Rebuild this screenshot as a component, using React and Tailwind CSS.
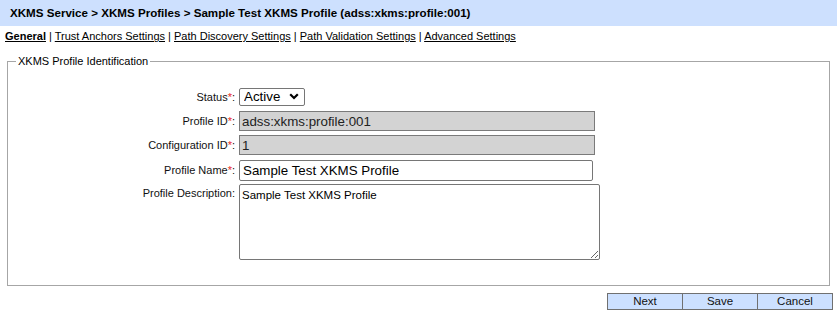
import { useState } from 'react';

const TABS = [
  { label: 'General', active: true },
  { label: 'Trust Anchors Settings' },
  { label: 'Path Discovery Settings' },
  { label: 'Path Validation Settings' },
  { label: 'Advanced Settings' },
];

function Label({ children, required, top }) {
  return (
    <div className={`w-[227px] shrink-0 text-right text-[11px] text-[#111] ${top ? 'pt-[1px]' : ''}`}>
      {children}
      {required && <span className="text-[#e8291c]">*</span>}:
    </div>
  );
}

export default function App() {
  const [status, setStatus] = useState('Active');
  const [name, setName] = useState('Sample Test XKMS Profile');
  const [desc, setDesc] = useState('Sample Test XKMS Profile');

  return (
    <div className="w-[837px] h-[314px] bg-white font-['Liberation_Sans',Arial,sans-serif] text-black">
      {/* breadcrumb bar */}
      <div className="h-[26px] bg-[#cde0fe] pl-[10px] flex items-center text-[11.6px] font-bold">
        XKMS Service &gt; XKMS Profiles &gt; Sample Test XKMS Profile (adss:xkms:profile:001)
      </div>

      {/* tabs */}
      <div className="h-[21px] pl-[5px] flex items-center text-[11px] whitespace-pre">
        {TABS.map((t, i) => (
          <span key={t.label}>
            {i > 0 && <span> | </span>}
            <a href="#" className={`underline ${t.active ? 'font-bold' : ''}`}>
              {t.label}
            </a>
          </span>
        ))}
      </div>

      <fieldset className="mx-[7px] mt-[7px] w-[823px] border border-[#a6a6a6] pb-[25px]">
        <legend className="ml-[8px] px-[2px] text-[11px] leading-[14px]">XKMS Profile Identification</legend>

        <div className="flex flex-col pt-[18px]">
          <div className="flex items-center gap-[4px] h-[22px]">
            <Label required>Status</Label>
            <div className="relative w-[66px] h-[18px]">
              <select
                value={status}
                onChange={(e) => setStatus(e.target.value)}
                className="block appearance-none w-full h-[18px] border border-[#767676] rounded-[2px] bg-white pl-[4px] py-0 text-[13.33px] leading-[16px]"
              >
                <option>Active</option>
                <option>Inactive</option>
              </select>
              <svg className="pointer-events-none absolute right-[6px] top-[5px]" width="10" height="7" viewBox="0 0 10 7">
                <path d="M1.2 1.2 L5 5 L8.8 1.2" fill="none" stroke="#000" strokeWidth="2.2" />
              </svg>
            </div>
          </div>

          <div className="flex items-center gap-[4px] h-[20px] mt-[3px]">
            <Label required>Profile ID</Label>
            <input
              readOnly
              value="adss:xkms:profile:001"
              className="w-[356px] h-[20px] border border-[#7a7a7a] bg-[#d3d3d3] px-[2px] text-[13.33px] text-[#222]"
            />
          </div>

          <div className="flex items-center gap-[4px] h-[20px] mt-[4px]">
            <Label required>Configuration ID</Label>
            <input
              readOnly
              value="1"
              className="w-[356px] h-[20px] border border-[#7a7a7a] bg-[#d3d3d3] px-[2px] text-[13.33px] text-[#222]"
            />
          </div>

          <div className="flex items-center gap-[4px] h-[21px] mt-[5px]">
            <Label required>Profile Name</Label>
            <input
              value={name}
              onChange={(e) => setName(e.target.value)}
              className="w-[354px] h-[21px] border border-[#767676] rounded-[2px] bg-white px-[3px] text-[13.33px]"
            />
          </div>

          <div className="flex items-start gap-[4px] mt-[3px]">
            <Label top>Profile Description</Label>
            <textarea
              value={desc}
              onChange={(e) => setDesc(e.target.value)}
              className="w-[361px] h-[76px] border border-[#767676] rounded-[2px] bg-white px-[2px] py-[2px] text-[11.5px] leading-[16px]"
            />
          </div>
        </div>
      </fieldset>

      {/* actions */}
      <div className="flex justify-end pr-[4px] mt-[7px]">
        {['Next', 'Save', 'Cancel'].map((b, i) => (
          <button
            key={b}
            className={`w-[76px] h-[17px] border border-[#707070] bg-[#cce0ff] text-[11.5px] leading-none text-[#111] ${i > 0 ? '-ml-px' : ''}`}
          >
            {b}
          </button>
        ))}
      </div>
    </div>
  );
}
